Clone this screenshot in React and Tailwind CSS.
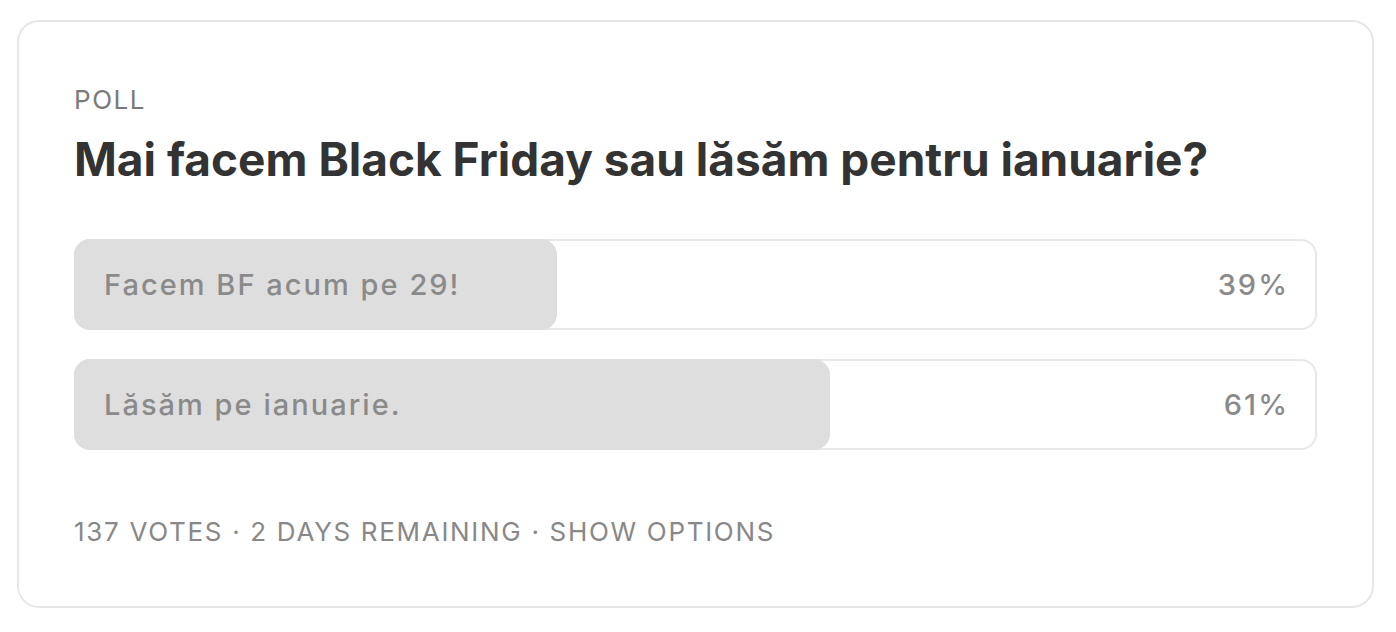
const options = [
  { label: 'Facem BF acum pe 29!', pct: 39 },
  { label: 'Lăsăm pe ianuarie.', pct: 61 },
];

const App = () => {
  return (
    <div className="bg-white min-h-screen pl-[17px] pt-[20px] font-['Inter',sans-serif]">
      <div className="w-[1357px] h-[588px] border-2 border-[#e6e6e6] rounded-[22px] px-[55px] pt-[62px]">
        <div className="text-[26px] leading-[32px] tracking-[0.06em] text-[#7a7a7a]">POLL</div>
        <h2 className="mt-[15px] text-[46px] leading-[56px] font-bold text-[#333333]">
          Mai facem Black Friday sau lăsăm pentru ianuarie?
        </h2>

        <div className="mt-[52px] flex flex-col gap-[29px]">
          {options.map(opt => (
            <div key={opt.label} className="relative h-[91px] border-2 border-[#e8e8e8] rounded-[16px] flex items-center justify-between px-[28px]">
              <div
                className="absolute -left-[2px] -top-[2px] -bottom-[2px] bg-[#dedede] rounded-[16px]"
                style={{ width: `${opt.pct}%` }}
              />
              <span className="relative text-[29px] font-medium tracking-[0.07em] text-[#8a8a8a]">{opt.label}</span>
              <span className="relative text-[29px] font-medium tracking-[0.07em] text-[#8a8a8a] -mr-[2px]">{opt.pct}%</span>
            </div>
          ))}
        </div>

        <div className="mt-[66px] text-[26px] leading-[32px] tracking-[0.065em] text-[#888888]">
          137 VOTES · 2 DAYS REMAINING · SHOW OPTIONS
        </div>
      </div>
    </div>
  );
};

export default App;
